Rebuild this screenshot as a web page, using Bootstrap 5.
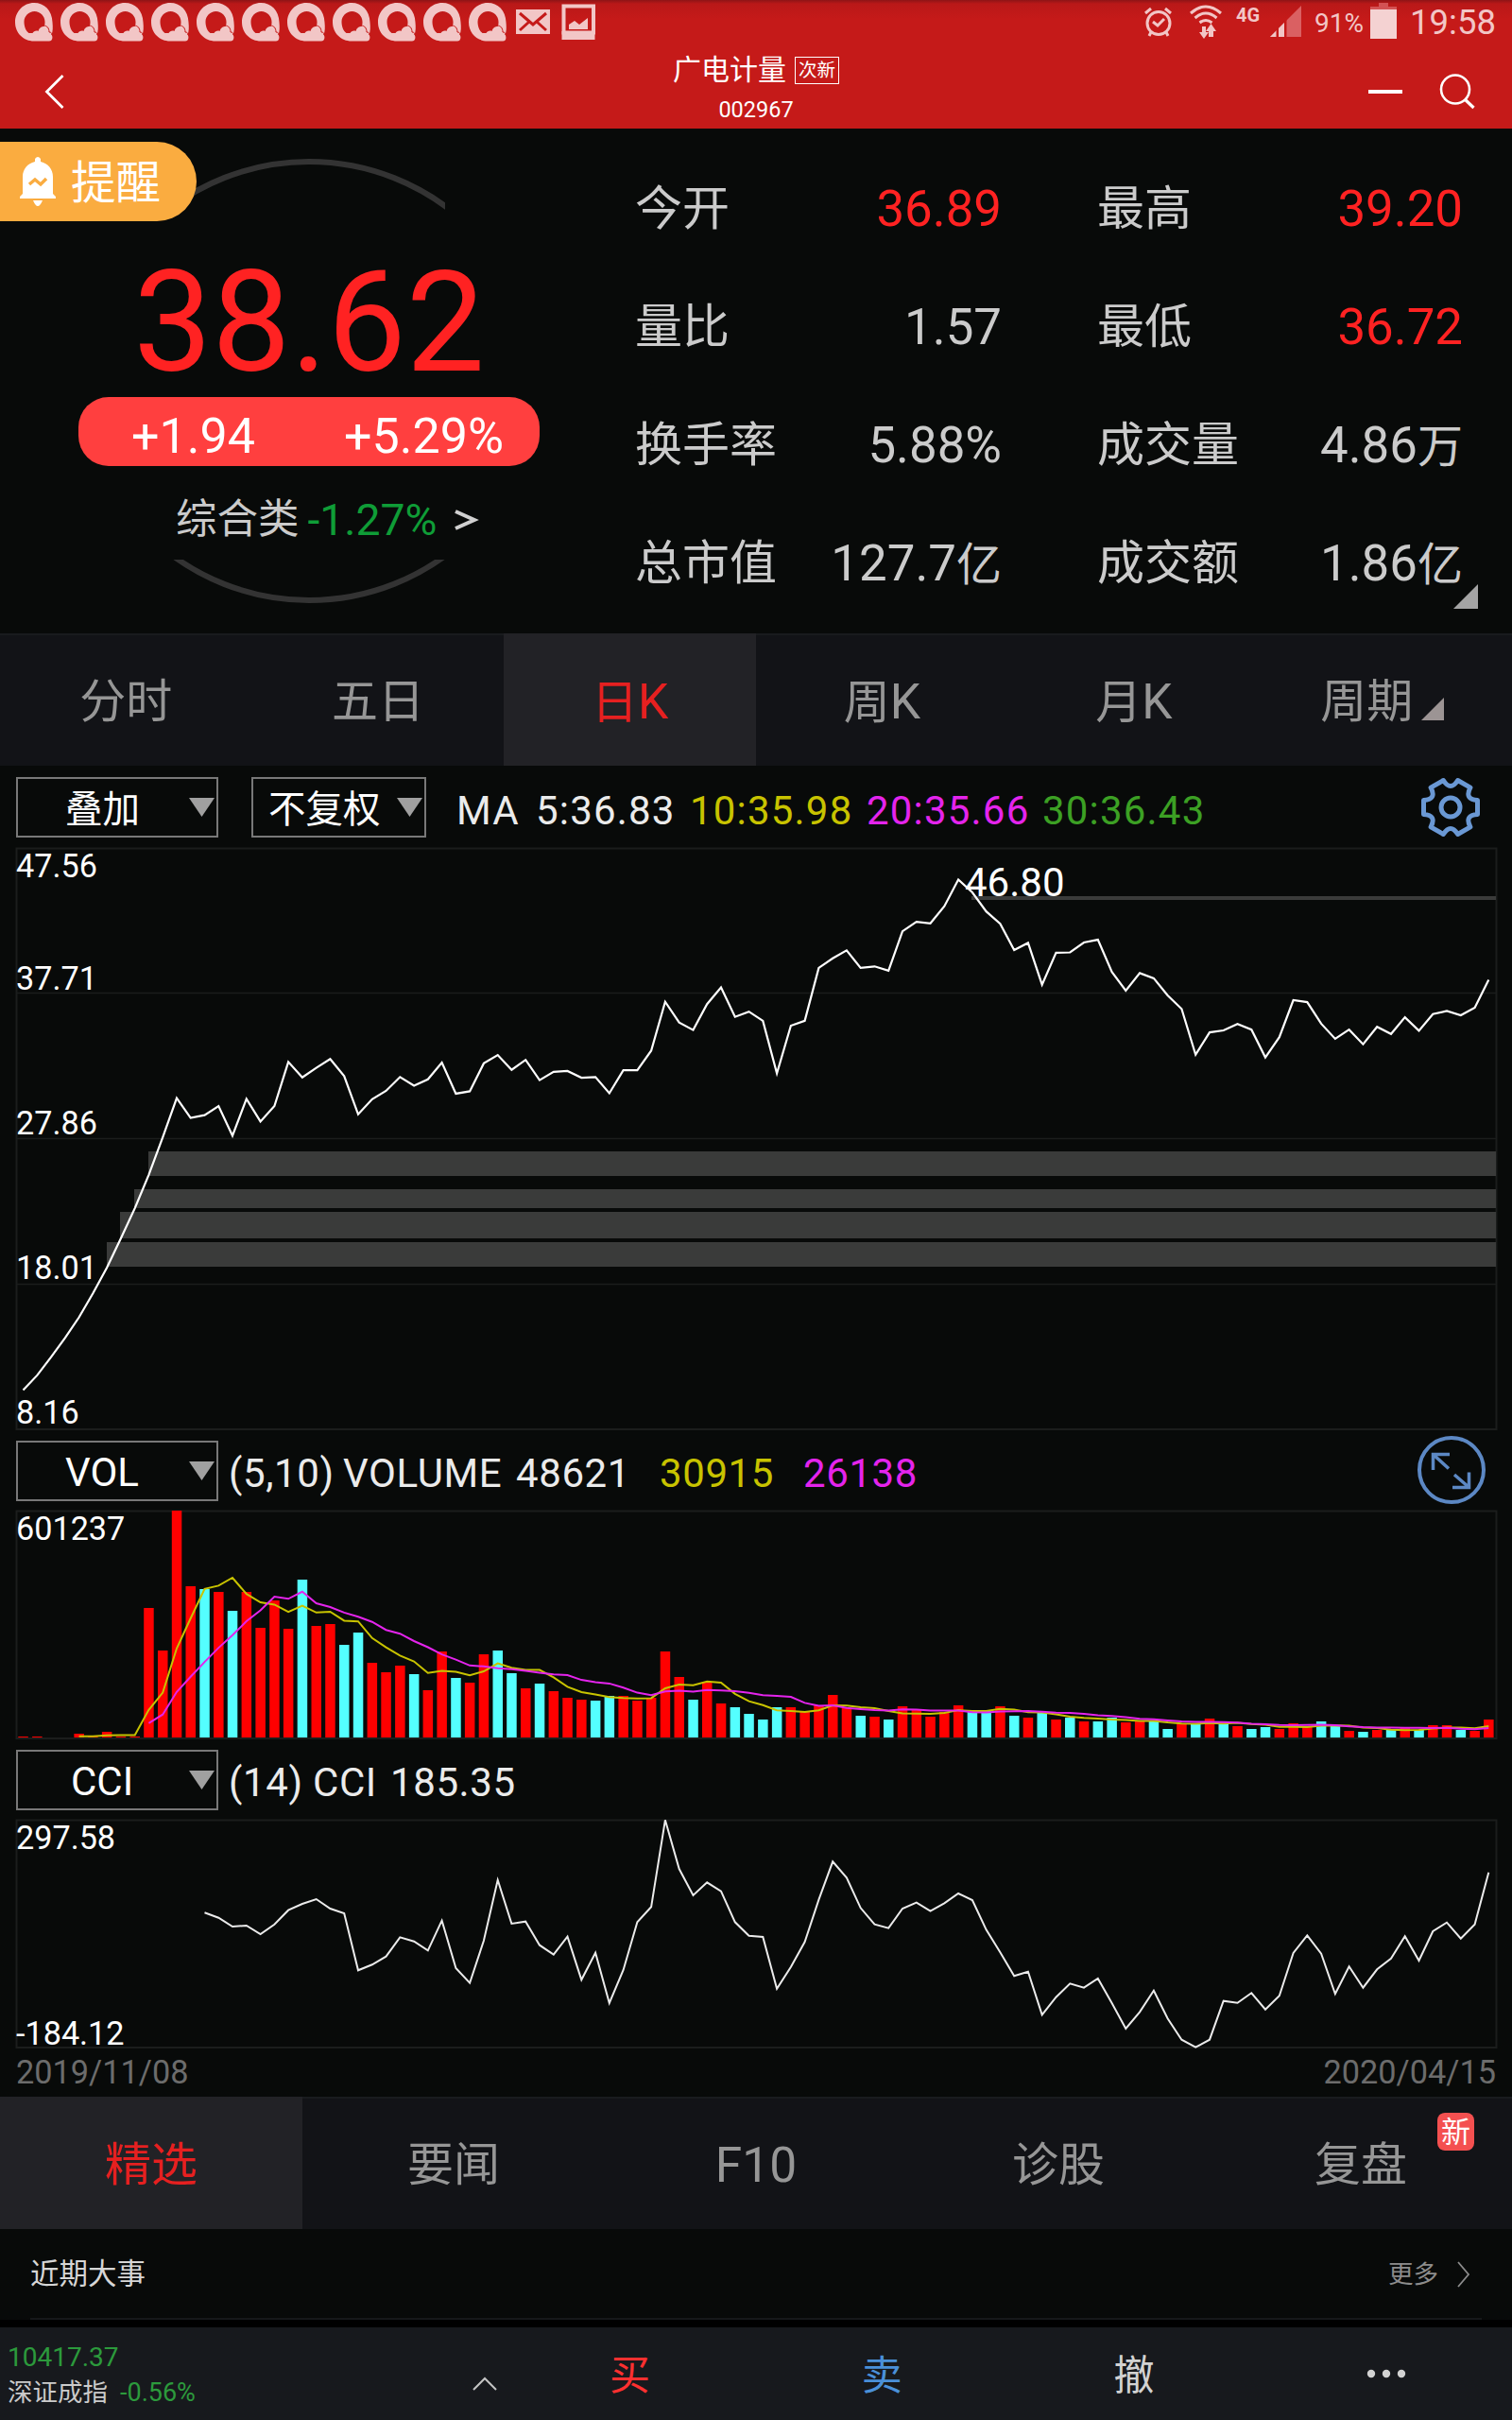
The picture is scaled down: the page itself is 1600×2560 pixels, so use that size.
<!DOCTYPE html>
<html lang="zh-CN">
<head>
<meta charset="utf-8">
<meta name="viewport" content="width=device-width, initial-scale=1">
<title>广电计量 002967</title>
<link href="https://cdn.jsdelivr.net/npm/bootstrap@5.3.0/dist/css/bootstrap.min.css" rel="stylesheet">
<style>
body{width:1600px;height:2560px;overflow:hidden;background:#080a09;color:#cbcbcb;font-family:Roboto,"Noto Sans CJK SC",sans-serif;line-height:1}
svg{display:block;flex:none;overflow:visible}
.topbar{height:136px;background:linear-gradient(#8e1416 0,#b91818 4px,#c51a19 20px)}
.status-row{height:46px;color:#f2c6c6}
.status-row .pct{font-size:28px;line-height:36px;margin:7px 0 0 13px;width:59px}
.status-row .clock{font-size:36.5px;line-height:40px;margin:4px 0 0 14px;padding-right:17px}
.status-row .net{font-size:20px;font-weight:700;line-height:20px;margin:6px 0 0 14px;width:36px}
.title-row{height:90px}
.title-name{font-size:30px;line-height:30px}
.title-tag{font-size:19.5px;line-height:27px;height:29px;width:47px;border:1px solid #fff;margin-left:9px;text-align:center}
.title-code{font-size:23.5px;line-height:28px;margin-top:13px}
.quote{height:534px}
.summary{width:654px}
.remind{left:0;top:14px;width:208px;height:84px;background:#faac40;border-radius:0 42px 42px 0;color:#fff;font-size:47.5px;line-height:84px;padding-left:21px}
.price{font-size:148px;line-height:148px;color:#ff2222;margin-top:132px}
.chg{width:488px;height:73px;margin:4px 0 0 0;border-radius:32px;background:#ff3f3f;color:#fff;font-size:52px;line-height:83px}
.chg span:first-child{margin-left:56px;width:225px}
.sector{font-size:43.5px;line-height:60px;margin-top:27px;padding-left:186px}
.sector .lat{font-size:46.3px;color:#0f9d37;margin:0 19px 0 9px}
.facts{padding:22px 52px 0 18px;column-gap:101px;display:grid;grid-template-columns:388px 387px;align-content:start}
.fact{height:125px;line-height:126px;font-size:50px}
.fact .num{font-size:52.8px}
.fact .num i{font-style:normal;font-size:48px}
.up{color:#ff2222}
.corner{right:36px;bottom:26px}
.tabbar{height:140px;background:#121317;color:#969696;font-size:49px;line-height:146px;border-top:2px solid #191b1e}
.tabbar>div{flex:1 1 0;text-align:center;height:140px;margin-top:-2px}
.tabbar .lat{font-size:51.5px}
.tabbar .on{background:#222226;color:#e62020}
.fresh{right:40px;top:17px;width:39px;height:40px;border-radius:8px;background:#f45050;color:#fff;font-size:31px;line-height:41px}
.tools{padding:0 33px 0 17px;height:85px;font-size:42px;color:#ebebeb;letter-spacing:.6px}
.tools.first{height:87px}
.ma-row{padding:8px 0 0 32px;letter-spacing:1.2px}
.pick{height:64px;border:2px solid #787878;color:#fff;letter-spacing:0;padding-right:2px}
.pick span{margin-top:5px}
.pick .cjk{font-size:39.5px;margin-top:7px}
.y{color:#c8c300}.m{color:#e424ec}.g{color:#3ca024}
.dates{height:51px;font-size:34.3px;line-height:50px;color:#6c6c6c;padding:0 17px}
.section-h{height:96px;padding:0 44px 0 32px;font-size:30.5px;color:#d6d6d6}
.section-h .more{font-size:26.5px;color:#8c8c8c}
.rule{height:2px;margin:-2px 32px 0;background:#16181a}
.dock{height:106px;border-top:8px solid #000;background:#17191d}
.dock .idx{width:533px;padding:15px 0 0 8px}
.dock .act{flex:1 1 0;text-align:center;font-size:43px;line-height:102px}
svg text{fill:#fff;font-size:34.2px}
</style>
<script src="https://cdn.jsdelivr.net/npm/bootstrap@5.3.0/dist/js/bootstrap.bundle.min.js"></script>
</head>
<body>
<svg width="0" height="0" class="position-absolute"><defs>
<symbol id="q" viewBox="0 0 40 41"><path fill="#f2c6c6" fill-rule="evenodd" d="M20 0C9 0 0 9 0 20.500s9 20 20 20h16c4 0 4-5 2.500-7 1.500-3 1.500-8 1-13C39 8 31 0 20 0zM20.500 9c6 0 11 5 11 11 0 2 0 3-1 5-2 0-5 1-6 5-2-1-5 0-6 2l-4 0c-3-2-5-7-5-12 0-6 5-11 11-11z"/><path fill="none" stroke="#c51a19" stroke-width="1" d="M30 24c4 0 6 3 6 7 2 0 3 1 3 3"/></symbol>
</defs></svg>

<header class="topbar text-white">
 <div class="status-row d-flex">
  <div class="d-flex" id="notes" style="padding:3px 0 0 16px"></div>
  <svg width="90" height="46" viewBox="544 0 90 46"><rect x="546" y="10" width="36" height="26" fill="#f2c6c6"/><path d="M550 14l14 12 14-12M550 32l10-9M578 32l-10-9" fill="none" stroke="#c51a19" stroke-width="3"/><path d="M596.500 6.500h31.500v28h-31.500z" fill="none" stroke="#f2c6c6" stroke-width="4"/><path d="M594.500 33h35v9h-35zM602 31v-5l6-4 5 4 9-7v12z" fill="#f2c6c6"/></svg>
  <svg class="ms-auto" width="86" height="46" viewBox="1210 0 86 46"><g fill="none" stroke="#f2c6c6" stroke-width="3"><circle cx="1228" cy="24.500" r="12"/><path d="M1222 23l5 4 7-7M1214 14l6-5M1241 14l-6-5M1220 34l-2 4M1236 34l2 4M1262 14q16-14 32 0M1266.500 19q11.500-10 23 0M1271.500 24q6.500-5 13 0"/></g><path d="M1274 28h4v6h3l-5 7-5-7h3zM1281 39v-6h-3l5.500-8 5.500 8h-3v6z" fill="#f2c6c6"/></svg>
  <div class="net">4G</div>
  <svg width="34" height="46" viewBox="1345 0 34 46"><path d="M1345 39l33-33v33z" fill="#da6062"/><path d="M1345 39l15-15v15z" fill="#f2c6c6"/><path d="M1351.500 30v9h2.500v-9zM1360 20v19h2.500v-19z" fill="#c51a19"/></svg>
  <div class="pct">91%</div>
  <svg width="28" height="46"><path d="M9 3h10v4h9v4H0V7h9z" fill="#d35254"/><path d="M0 10h28v31H0z" fill="#f4d2d2"/></svg>
  <div class="clock">19:58</div>
 </div>
 <div class="title-row d-flex justify-content-between">
  <svg width="600" height="90" viewBox="0 46 600 90"><path d="M66.500 80L49.500 97l17 17" fill="none" stroke="#fff" stroke-width="2.800"/></svg>
  <div class="d-flex flex-column align-items-center">
   <div class="d-flex align-items-center" style="margin-top:13px"><span class="title-name">广电计量</span><span class="title-tag">次新</span></div>
   <div class="title-code">002967</div>
  </div>
  <svg width="600" height="90" viewBox="1000 46 600 90"><g fill="none" stroke="#fff"><path d="M1448 97h36" stroke-width="4"/><circle cx="1540" cy="94.500" r="15" stroke-width="2.600"/><path d="M1550 105l9.500 9" stroke-width="3.200"/></g></svg>
 </div>
</header>

<main>
<section class="quote d-flex position-relative">
 <svg class="position-absolute top-0 start-0" width="654" height="534" viewBox="0 136 654 534"><defs><clipPath id="ct"><path d="M183 150h288v100H183z"/></clipPath><clipPath id="cb"><path d="M170 592h320v60H170z"/></clipPath></defs><g fill="none" stroke="#333" stroke-width="6"><circle cx="327" cy="415" r="244" clip-path="url(#ct)"/><circle cx="327" cy="391" r="244" clip-path="url(#cb)"/></g></svg>
 <div class="remind position-absolute d-flex align-items-center"><svg width="38" height="52" viewBox="0 0 38 52"><path fill="#fff" d="M16 2q3-4 6 0v3c8 2 13 8 13 16v18l3 3v2H0v-2l3-3V21C3 13 8 7 16 5zM14 46h10q-5 12-10 0z"/><path d="M10 29l6-5 6 5 6-6" fill="none" stroke="#faac40" stroke-width="3.500"/></svg><span style="margin:4px 0 0 16px">提醒</span></div>
 <div class="summary d-flex flex-column align-items-center">
  <div class="price">38.62</div>
  <div class="chg d-flex"><span>+1.94</span><span>+5.29%</span></div>
  <div class="sector d-flex align-items-center align-self-start text-nowrap"><span>综合类</span><span class="lat">-1.27%</span><svg width="24" height="24"><path d="M1 3l20 9-20 9" fill="none" stroke="#d0d0d0" stroke-width="4"/></svg></div>
 </div>
 <div class="facts">
  <div class="fact d-flex justify-content-between"><span>今开</span><span class="num up">36.89</span></div>
  <div class="fact d-flex justify-content-between"><span>最高</span><span class="num up">39.20</span></div>
  <div class="fact d-flex justify-content-between"><span>量比</span><span class="num">1.57</span></div>
  <div class="fact d-flex justify-content-between"><span>最低</span><span class="num up">36.72</span></div>
  <div class="fact d-flex justify-content-between"><span>换手率</span><span class="num">5.88%</span></div>
  <div class="fact d-flex justify-content-between"><span>成交量</span><span class="num">4.86<i>万</i></span></div>
  <div class="fact d-flex justify-content-between"><span>总市值</span><span class="num">127.7<i>亿</i></span></div>
  <div class="fact d-flex justify-content-between"><span>成交额</span><span class="num">1.86<i>亿</i></span></div>
 </div>
 <svg class="corner position-absolute" width="26" height="26"><path d="M26 0v26H0z" fill="#a4a4a4"/></svg>
</section>

<nav class="tabbar d-flex">
 <div>分时</div><div>五日</div><div class="on">日<span class="lat">K</span></div><div>周<span class="lat">K</span></div><div>月<span class="lat">K</span></div>
 <div class="d-flex justify-content-center"><span>周期</span><svg width="24" height="24" style="margin:68px 8px 0 9px"><path d="M24 0v24H0z" fill="#9c9494"/></svg></div>
</nav>

<div class="tools first d-flex align-items-center">
 <div class="pick d-flex align-items-center justify-content-between" style="width:214px;padding-left:50px"><span class="cjk">叠加</span><svg width="27" height="20"><path d="M0 0h27L13.500 20z" fill="#a0a0a0"/></svg></div>
 <div class="pick d-flex align-items-center justify-content-between" style="width:185px;padding-left:16px;margin-left:35px"><span class="cjk">不复权</span><svg width="27" height="20"><path d="M0 0h27L13.500 20z" fill="#a0a0a0"/></svg></div>
 <div class="ma-row d-flex"><span style="width:84px">MA</span><span style="width:163px">5:36.83</span><span class="y" style="width:187px">10:35.98</span><span class="m" style="width:186px">20:35.66</span><span class="g">30:36.43</span></div>
 <svg class="ms-auto" width="64" height="64" viewBox="-32 -32 64 64" fill="none" stroke="#6a98d4" stroke-width="5" stroke-linejoin="round"><path id="gear"/><circle r="10"/></svg>
</div>
<svg id="kline" width="1600" height="616" viewBox="0 897 1600 616"></svg>
<div class="tools d-flex align-items-center">
 <div class="pick d-flex align-items-center justify-content-between" style="width:214px;padding-left:50px"><span>VOL</span><svg width="27" height="20"><path d="M0 0h27L13.500 20z" fill="#a0a0a0"/></svg></div>
 <div class="d-flex" style="padding:6px 0 0 11px"><span style="width:121px">(5,10)</span><span style="width:183px">VOLUME</span><span style="width:152px">48621</span><span class="y" style="width:152px">30915</span><span class="m">26138</span></div>
 <svg style="margin-left:auto;margin-right:-6px" width="74" height="74" viewBox="1499 1519 74 74" fill="none" stroke="#5c88c4" stroke-width="4"><circle cx="1536" cy="1555" r="34"/><path d="M1534 1538.500h-17.500v16.500M1517 1539l16 14.500M1537 1573.500h17.500v-16M1554 1573l-15-13" stroke-width="3.500"/></svg>
</div>
<svg id="vol" width="1600" height="242" viewBox="0 1598 1600 242"></svg>
<div class="tools d-flex align-items-center">
 <div class="pick d-flex align-items-center justify-content-between" style="width:214px;padding-left:56px"><span>CCI</span><svg width="27" height="20"><path d="M0 0h27L13.500 20z" fill="#a0a0a0"/></svg></div>
 <div class="d-flex" style="padding:6px 0 0 11px"><span style="width:89px">(14)</span><span style="width:82px">CCI</span><span>185.35</span></div>
</div>
<svg id="cci" width="1600" height="242" viewBox="0 1925 1600 242"></svg>
<div class="dates d-flex justify-content-between"><span>2019/11/08</span><span>2020/04/15</span></div>

<nav class="tabbar d-flex">
 <div class="on">精选</div><div>要闻</div><div><span class="lat">F10</span></div><div>诊股</div><div class="position-relative">复盘<span class="fresh position-absolute">新</span></div>
</nav>
<div class="section-h d-flex align-items-center justify-content-between"><span>近期大事</span><span class="more d-flex align-items-center">更多<svg width="14" height="28" style="margin-left:20px"><path d="M1 1l11 13L1 27" fill="none" stroke="#8c8c8c" stroke-width="1.800"/></svg></span></div>
<div class="rule"></div>
</main>

<footer class="dock d-flex">
 <div class="idx d-flex justify-content-between">
  <div style="line-height:34px"><div style="font-size:28px;color:#2c9a3c">10417.37</div><div style="font-size:26.500px;margin-top:3px">深证成指<span style="font-size:27px;color:#2c9a3c;margin-left:13px">-0.56%</span></div></div>
  <svg width="26" height="16" style="margin:37px 7px 0 0"><path d="M1 14L13 2l12 12" fill="none" stroke="#c4c4c4" stroke-width="2"/></svg>
 </div>
 <div class="act" style="color:#ff3030">买</div><div class="act" style="color:#4a90d9">卖</div><div class="act" style="color:#d2d2d2">撤</div>
 <div class="act d-flex justify-content-center"><svg width="44" height="98"><g fill="#d2d2d2"><circle cx="6" cy="49" r="4.200"/><circle cx="22" cy="49" r="4.200"/><circle cx="38" cy="49" r="4.200"/></g></svg></div>
</footer>

<script>
document.getElementById('notes').innerHTML = '<svg width="40" height="41" style="margin-right:8px"><use href="#q"/></svg>'.repeat(11);

// Settings gear: six flat teeth with rounded notches between them.
const pol = (r, a) => (r * Math.cos(a * Math.PI / 180)).toFixed(1) + ' ' + (r * Math.sin(a * Math.PI / 180)).toFixed(1);
let gear = '';
for (let a = 0; a < 360; a += 60) gear += (a ? 'L' : 'M') + pol(29.5, a - 15) + 'L' + pol(29.5, a + 15) + 'Q' + pol(16.5, a + 30) + ' ' + pol(29.5, a + 45);
document.getElementById('gear').setAttribute('d', gear + 'Z');

const X = i => 24.5 + i * 14.77;
const line = (ys, from, color, w) => `<polyline fill="none" stroke="${color}" stroke-width="${w}" points="${ys.map((y, i) => X(i + from).toFixed(1) + ',' + y.toFixed(1)).join(' ')}"/>`;
const frame = (y, h) => `<rect x="17.500" y="${y}" width="1566" height="${h}" fill="none" stroke="#1b1d1c" stroke-width="2"/>`;

const close = [1403,1366,1320,1272,1220,1160,1095,1022,946,862,768,669,719,712,689,764,671,728,689,578,617,593,571,614,710,672,651,616,638,622,580,658,652,582,561,598,573,624,603,601,618,616,657,599,599,550,427,479,498,433,391,465,452,475,607,487,475,342,318,298,342,338,349,250,226,230,187,120,152,200,231,297,279,384,304,303,278,271,352,399,355,368,411,445,560,504,499,483,497,567,516,423,428,482,520,497,534,490,508,466,500,458,450,461,442,372].map(v => 880 + v / 2.376);
let k = frame(897.5, 614.5);
for (const y of [1050.5, 1204.5, 1358.5]) k += `<path d="M17 ${y}H1583" stroke="#1b1d1c" stroke-width="1.500"/>`;
for (const [x, y, h] of [[157,1218,26],[142,1258,20],[127,1282,28],[113,1314,26],[1028,948,4]]) k += `<rect x="${x}" y="${y}" width="${1583 - x}" height="${h}" fill="#3a3b3a"/>`;
k += line(close, 0, '#fff', 2.2);
for (const [t, y] of [['47.56',928],['37.71',1047],['27.86',1200],['18.01',1353],['8.16',1506]]) k += `<text x="17" y="${y}">${t}</text>`;
k += '<text x="1021" y="948" style="font-size:42px">46.80</text>';
document.getElementById('kline').innerHTML = k;

const tops = [1011,1011,1014,1014,1002,1011,996,1011,1011,603,738,294,534,543,552,612,552,666,579,669,513,660,654,720,681,777,807,786,813,864,741,825,840,750,738,810,858,843,867,888,894,897,882,882,897,888,741,822,894,837,906,918,939,957,918,918,933,912,879,921,945,948,957,915,927,948,933,912,930,927,915,945,951,936,957,951,963,963,951,966,963,963,987,969,969,954,969,978,987,981,987,969,981,963,978,993,996,990,990,984,990,975,975,990,993,957].map(v => 1500 + v / 3);
const down = new Set([13,15,20,23,24,28,31,34,35,37,41,42,48,51,52,53,54,60,62,68,69,71,73,75,77,78,81,82,84,86,88,89,93,94,96,98,100,103]);
const ma = n => tops.slice(n - 1).map((_, i) => tops.slice(i, i + n).reduce((a, b) => a + b) / n);
let v = frame(1598.5, 240.5);
tops.forEach((t, i) => v += `<rect x="${(X(i) - 5.2).toFixed(1)}" y="${t}" width="10.500" height="${1838 - t}" fill="${down.has(i) ? '#54ffff' : '#f00'}"/>`);
v += line(ma(5), 4, '#c8c300', 2) + line(ma(10), 9, '#e424ec', 2) + '<text x="17" y="1629">601237</text>';
document.getElementById('vol').innerHTML = v;

const cci = [370,386,414,411,438,407,362,342,327,357,372,553,535,509,448,461,490,395,546,593,459,266,405,398,473,503,446,583,497,657,552,400,352,76,231,315,274,302,400,443,447,611,542,463,329,208,259,355,407,419,357,338,365,340,309,330,424,496,571,557,694,638,595,608,579,657,738,685,617,706,773,797,773,650,656,625,677,634,498,442,500,628,541,608,550,515,445,522,429,401,452,407,242].map(v => 1900 + v / 3);
document.getElementById('cci').innerHTML = frame(1925.5, 240.5) + line(cci, 13, '#ebebeb', 2) + '<text x="17" y="1956">297.58</text><text x="17" y="2163">-184.12</text>';
</script>
</body>
</html>
